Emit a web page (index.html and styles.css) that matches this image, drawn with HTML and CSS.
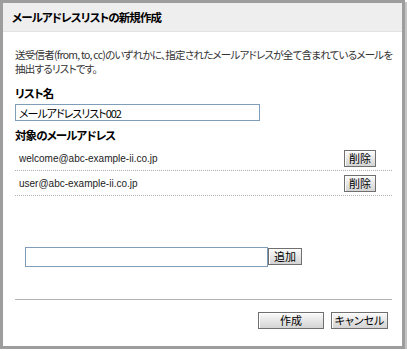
FILE: index.html
```html
<!DOCTYPE html>
<html lang="ja">
<head>
<meta charset="utf-8">
<title>メールアドレスリストの新規作成</title>
<link rel="stylesheet" href="styles.css">
</head>
<body>
<div class="dialog">
  <div class="titlebar">メールアドレスリストの新規作成</div>
  <div class="content">
    <p class="desc">送受信者(from, to, cc)のいずれかに、指定されたメールアドレスが全て含まれているメールを<br>抽出するリストです。</p>
    <div class="label">リスト名</div>
    <input class="name-input" type="text" value="メールアドレスリスト002">
    <div class="label label-addr">対象のメールアドレス</div>
    <div class="addr-list">
      <div class="addr-row">
        <span class="addr">welcome@abc-example-ii.co.jp</span>
        <button class="btn btn-del">削除</button>
      </div>
      <div class="addr-row">
        <span class="addr">user@abc-example-ii.co.jp</span>
        <button class="btn btn-del">削除</button>
      </div>
    </div>
    <div class="add-row">
      <input class="add-input" type="text">
      <button class="btn btn-add">追加</button>
    </div>
    <div class="divider"></div>
    <div class="footer">
      <button class="btn btn-create">作成</button>
      <button class="btn btn-cancel">キャンセル</button>
    </div>
  </div>
</div>
</body>
</html>
```
FILE: styles.css
```css
html, body {
  margin: 0;
  padding: 0;
  background: #ffffff;
}

body {
  font-family: "Noto Sans CJK JP", "Liberation Sans", sans-serif;
  font-feature-settings: "palt";
  color: #000;
}

.dialog {
  width: 405px;
  height: 349px;
  box-sizing: border-box;
  border: 3px solid #9d9d9d;
  box-shadow: 2px 2px 0 #c4c4c4;
  background: #fff;
  display: flex;
  flex-direction: column;
}

.titlebar {
  height: 29px;
  box-sizing: border-box;
  background: #eeeeee;
  border-bottom: 1px solid #e2e2e2;
  padding-left: 9px;
  font-size: 11.5px;
  font-weight: bold;
  line-height: 29px;
  letter-spacing: -0.9px;
}

.content {
  padding: 16px 10px 0 12px;
  display: flex;
  flex-direction: column;
}

.desc {
  margin: 0;
  font-size: 10.5px;
  line-height: 14px;
  color: #333;
  letter-spacing: -0.75px;
  white-space: nowrap;
}

.label {
  margin-top: 9px;
  font-size: 11.5px;
  font-weight: bold;
  line-height: 16px;
  letter-spacing: -0.9px;
}

.label-addr {
  margin-top: 6px;
}

.name-input {
  margin: 3px 0 0 0;
  width: 245px;
  height: 17px;
  box-sizing: border-box;
  border: 1px solid #7f9db9;
  padding: 0 3px;
  font-family: "Noto Sans CJK JP", "Liberation Sans", sans-serif;
  font-feature-settings: "palt";
  font-size: 11px;
  letter-spacing: -1px;
  line-height: 15px;
  color: #000;
  outline: none;
}

.addr-list {
  margin-top: 3px;
}

.addr-row {
  height: 25px;
  box-sizing: border-box;
  border-bottom: 1px dotted #b0b0b0;
  display: flex;
  align-items: center;
  justify-content: space-between;
  padding: 0 16px 0 4px;
}

.addr {
  font-family: "Liberation Sans", "Noto Sans CJK JP", sans-serif;
  font-size: 10px;
  color: #222;
}

.btn {
  margin: 0;
  padding: 0;
  box-sizing: border-box;
  height: 17px;
  border: 1px solid #6f6f6f;
  background: linear-gradient(#fbfbfb, #e6e6e6 50%, #d4d4d4);
  box-shadow: inset 1px 1px 0 #ffffff;
  font-family: "Noto Sans CJK JP", "Liberation Sans", sans-serif;
  font-feature-settings: "palt";
  font-size: 11px;
  line-height: 15px;
  color: #000;
}

.btn-del {
  width: 32px;
}

.add-row {
  margin-top: 51px;
  padding-left: 10px;
  display: flex;
  align-items: flex-start;
}

.add-input {
  margin: 0;
  width: 243px;
  height: 20px;
  box-sizing: border-box;
  border: 1px solid #7f9db9;
  outline: none;
}

.btn-add {
  margin-top: 1px;
  width: 34px;
}

.divider {
  margin-top: 32px;
  height: 1px;
  background: #b4b4b4;
}

.footer {
  margin-top: 12px;
  display: flex;
  justify-content: flex-end;
  gap: 7px;
  padding-right: 4px;
}

.btn-create {
  width: 66px;
}

.btn-cancel {
  width: 57px;
}
```
